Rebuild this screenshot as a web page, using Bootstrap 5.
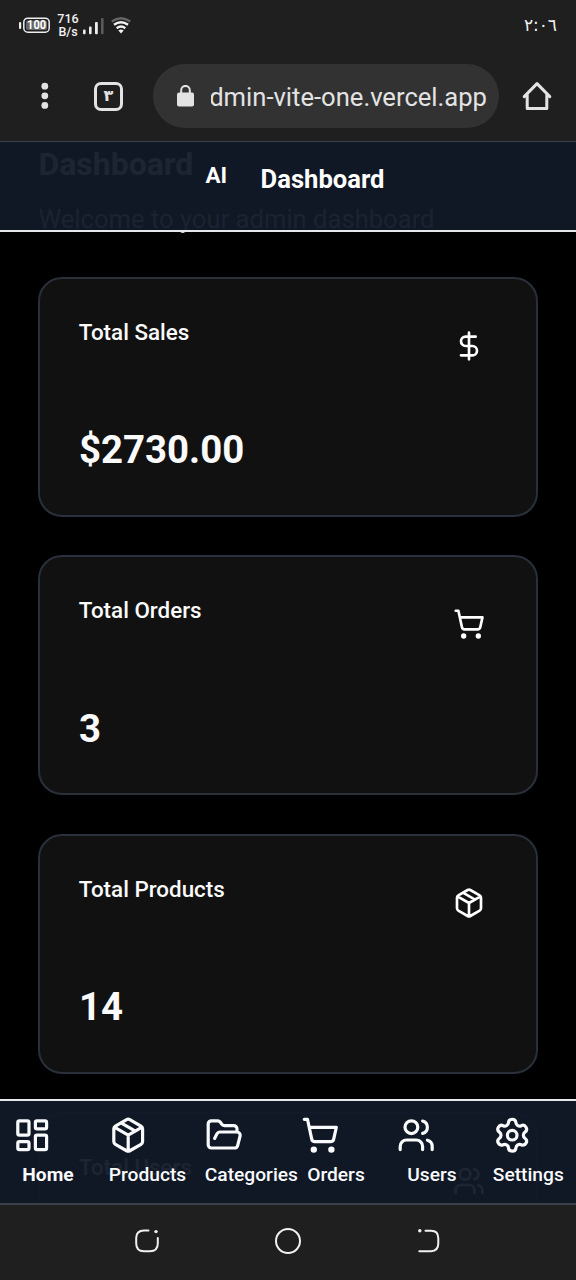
<!DOCTYPE html>
<html lang="en">
<head>
<meta charset="utf-8">
<meta name="viewport" content="width=device-width, initial-scale=1">
<title>Dashboard</title>
<link href="https://cdn.jsdelivr.net/npm/bootstrap@5.3.0/dist/css/bootstrap.min.css" rel="stylesheet">
<style>
  body { width: 576px; height: 1280px; background: #1f1f1f; color: #fff; font-family: Roboto, "DejaVu Sans", sans-serif; }
  svg { display: block; flex: none; }
  .ico { fill: none; stroke: currentColor; stroke-width: 2; stroke-linecap: round; stroke-linejoin: round; }
  .status { height: 51px; padding: 0 19px; color: #f2f2f2; }
  .speed { font-size: 12.5px; line-height: 12.5px; font-weight: 500; width: 24px; margin-left: 5px; }
  .signal { margin-left: 2px; }
  .wifi { margin-left: 7px; }
  .clock { font: 500 17px/20px "DejaVu Sans", sans-serif; letter-spacing: -1.1px; padding-bottom: 2px; }
  .browser { height: 90px; color: #e3e3e3; padding: 0 24px 0 39px; }
  .tabs-btn { width: 29px; height: 29px; border: 3px solid #e3e3e3; border-radius: 7px; font: bold 16px/20px "DejaVu Sans", sans-serif; margin-left: 43px; }
  .url { width: 346px; height: 64px; border-radius: 32px; background: #323232; margin-left: 30px; padding: 0 12px 0 24px; }
  .url-text { width: 276px; font-size: 25.6px; line-height: 40px; margin: 2px 0 0 17px; }
  .home-btn { margin-left: 23px; }
  .screen { height: 1064px; background: #000; }
  .topbar { height: 91px; border-top: 1px solid #374151; border-bottom: 2px solid #e5e7eb; background: rgba(17,24,39,.95); z-index: 2; }
  .topbar h1 { font-size: 25.6px; line-height: 36px; font-weight: 700; margin: 19px 0 0 33.5px; }
  .brand-mark { font-size: 22.4px; line-height: 32px; font-weight: 700; margin: 17px 0 0 205.5px; }
  .page { padding: 0 38.4px; }
  .page h2 { font-size: 32px; line-height: 44px; font-weight: 700; margin: 0; padding-top: 1px; }
  .welcome { font-size: 25.6px; line-height: 38px; color: #cfd3da; height: 91px; padding-top: 14px; }
  .stats { gap: 38.4px; }
  .stat { height: 240px; border: 2px solid #29303a; border-radius: 24px; background: #111; padding: 38px; flex: none; }
  .stat-label { font-size: 22.4px; line-height: 30px; font-weight: 500; color: #fafafa; padding-left: .4px; }
  .stat-icon { padding: 12.8px; }
  .stat-value { font-size: 38.4px; line-height: 51.2px; font-weight: 700; color: #fafafa; margin-bottom: 1.4px; padding-left: .5px; }
  .bottombar { height: 106px; border-top: 2px solid #e5e7eb; border-bottom: 2px solid #3a4049; background: rgba(17,24,39,.95); z-index: 2; }
  .tab { width: 96px; padding: 15.2px 12.8px 0; color: #f9fafb; }
  .tab svg { margin-left: -.3px; }
  .tab span { display: block; font-size: 19.2px; line-height: 26px; font-weight: 500; text-align: center; white-space: nowrap; margin-top: 7px; }
  .tab.current span { font-weight: 700; }
  .sysnav { height: 75px; padding: 0 134px 3px; color: #f1f1f1; }
</style>
</head>
<body class="m-0 overflow-hidden">
<svg width="0" height="0" class="position-absolute">
  <symbol id="package" viewBox="0 0 24 24"><path d="M11 21.73a2 2 0 0 0 2 0l7-4A2 2 0 0 0 21 16V8a2 2 0 0 0-1-1.73l-7-4a2 2 0 0 0-2 0l-7 4A2 2 0 0 0 3 8v8a2 2 0 0 0 1 1.73zM12 22V12M3.29 7 12 12l8.71-5M7.5 4.27l9 5.15"/></symbol>
  <symbol id="cart" viewBox="0 0 24 24"><circle cx="8" cy="21" r="1"/><circle cx="19" cy="21" r="1"/><path d="M2.05 2.05h2l2.66 12.42a2 2 0 0 0 2 1.58h9.78a2 2 0 0 0 1.95-1.57l1.65-7.43H5.12"/></symbol>
  <symbol id="users" viewBox="0 0 24 24"><path d="M16 21v-2a4 4 0 0 0-4-4H6a4 4 0 0 0-4 4v2M16 3.13a4 4 0 0 1 0 7.74M22 21v-2a4 4 0 0 0-3-3.87"/><circle cx="9" cy="7" r="4"/></symbol>
</svg>

<div class="status d-flex align-items-center justify-content-between">
  <div class="d-flex align-items-center">
    <svg width="32" height="17" viewBox="0 0 32 17"><rect x="0" y="5" width="2.2" height="7" rx="1" fill="#eee"/><rect x="4.8" y="1.2" width="25.4" height="14" rx="4" fill="#1f1f1f" stroke="#eee" stroke-width="1.5"/><rect x="7" y="3.4" width="21" height="9.6" rx="2" fill="#666"/><text x="17.6" y="12.4" text-anchor="middle" font-family="Roboto" font-weight="700" font-size="12" fill="#fff" textLength="19" lengthAdjust="spacingAndGlyphs">100</text></svg>
    <div class="speed text-center">716<br>B/s</div>
    <svg class="signal" width="22" height="18" viewBox="0 0 22 18"><g fill="#eee"><rect x="1" y="12.6" width="2.6" height="4.6" rx="1"/><rect x="7" y="9.6" width="2.6" height="7.6" rx="1"/><rect x="13" y="5" width="2.8" height="12.2" rx="1"/></g><rect x="19" y="1" width="2.6" height="16.2" rx="1" fill="#5a5a5a"/></svg>
    <svg class="wifi" width="20" height="17" viewBox="0 0 20 17" fill="none" stroke="#f2f2f2" stroke-width="2.4"><path d="M.8 4.6Q10-2 19.2 4.6" stroke="#666"/><path d="M3 7.8q7-5.2 14 0M5.7 11.2q4.3-3.2 8.6 0"/><path d="M7.4 13.4q2.6-1.8 5.2 0L10 16.4z" fill="#f2f2f2" stroke="none"/></svg>
  </div>
  <bdo dir="ltr" class="clock">٢:٠٦</bdo>
</div>

<div class="browser d-flex align-items-center">
  <svg width="12" height="28" viewBox="0 0 12 28" fill="currentColor"><circle cx="5.8" cy="4.2" r="3.4"/><circle cx="5.8" cy="13.8" r="3.4"/><circle cx="5.8" cy="23.4" r="3.4"/></svg>
  <div class="tabs-btn d-flex align-items-center justify-content-center flex-shrink-0">٣</div>
  <div class="url d-flex align-items-center flex-shrink-0">
    <svg width="17" height="22" viewBox="0 0 17 22"><rect x="0" y="7.5" width="17" height="14" rx="2" fill="#e3e3e3"/><path d="M4.2 8V5.2a4.3 4.3 0 0 1 8.6 0V8" fill="none" stroke="#e3e3e3" stroke-width="2"/></svg>
    <div class="url-text d-flex justify-content-end overflow-hidden text-nowrap">dmin-vite-one.vercel.app</div>
  </div>
  <svg class="home-btn" width="30" height="30" viewBox="0 0 30 30" fill="none" stroke="currentColor" stroke-width="3" stroke-linejoin="round" stroke-linecap="round"><path d="M2.2 15.6 15 2.6l12.8 13M5.2 13.5v14h19.6v-14"/></svg>
</div>

<main class="screen position-relative overflow-hidden">
  <header class="topbar position-absolute top-0 start-0 w-100 d-flex align-items-start">
    <div class="brand-mark">AI</div>
    <h1>Dashboard</h1>
  </header>

  <div class="page">
    <h2>Dashboard</h2>
    <div class="welcome">Welcome to your admin dashboard</div>
    <div class="stats d-flex flex-column">
      <section class="stat d-flex flex-column justify-content-between">
        <div class="d-flex justify-content-between align-items-start"><div class="stat-label">Total Sales</div><div class="stat-icon"><svg class="ico" width="32" height="32" viewBox="0 0 24 24"><path d="M12 2v20M17 5H9.5a3.5 3.5 0 0 0 0 7h5a3.5 3.5 0 0 1 0 7H6"/></svg></div></div>
        <div class="stat-value">$2730.00</div>
      </section>
      <section class="stat d-flex flex-column justify-content-between">
        <div class="d-flex justify-content-between align-items-start"><div class="stat-label">Total Orders</div><div class="stat-icon"><svg class="ico" width="32" height="32"><use href="#cart"/></svg></div></div>
        <div class="stat-value">3</div>
      </section>
      <section class="stat d-flex flex-column justify-content-between">
        <div class="d-flex justify-content-between align-items-start"><div class="stat-label">Total Products</div><div class="stat-icon"><svg class="ico" width="32" height="32"><use href="#package"/></svg></div></div>
        <div class="stat-value">14</div>
      </section>
      <section class="stat d-flex flex-column justify-content-between">
        <div class="d-flex justify-content-between align-items-start"><div class="stat-label">Total Users</div><div class="stat-icon"><svg class="ico" width="32" height="32"><use href="#users"/></svg></div></div>
      </section>
    </div>
  </div>

  <nav class="bottombar position-absolute bottom-0 start-0 w-100 d-flex">
    <div class="tab current"><svg class="ico" width="38.4" height="38.4" viewBox="0 0 24 24"><rect x="3" y="3" width="7" height="9" rx="1"/><rect x="14" y="3" width="7" height="5" rx="1"/><rect x="14" y="12" width="7" height="9" rx="1"/><rect x="3" y="16" width="7" height="5" rx="1"/></svg><span>Home</span></div>
    <div class="tab"><svg class="ico" width="38.4" height="38.4"><use href="#package"/></svg><span>Products</span></div>
    <div class="tab"><svg class="ico" width="38.4" height="38.4" viewBox="0 0 24 24"><path d="m6 14 1.5-2.9A2 2 0 0 1 9.24 10H20a2 2 0 0 1 1.94 2.5l-1.54 6a2 2 0 0 1-1.95 1.5H4a2 2 0 0 1-2-2V5a2 2 0 0 1 2-2h3.9a2 2 0 0 1 1.69.9l.81 1.2a2 2 0 0 0 1.67.9H18a2 2 0 0 1 2 2v2"/></svg><span>Categories</span></div>
    <div class="tab"><svg class="ico" width="38.4" height="38.4"><use href="#cart"/></svg><span>Orders</span></div>
    <div class="tab"><svg class="ico" width="38.4" height="38.4"><use href="#users"/></svg><span>Users</span></div>
    <div class="tab"><svg class="ico" width="38.4" height="38.4" viewBox="0 0 24 24"><path d="M9.671 4.136a2.34 2.34 0 0 1 4.659 0 2.34 2.34 0 0 0 3.319 1.915 2.34 2.34 0 0 1 2.33 4.033 2.34 2.34 0 0 0 0 3.831 2.34 2.34 0 0 1-2.33 4.033 2.34 2.34 0 0 0-3.319 1.915 2.34 2.34 0 0 1-4.659 0 2.34 2.34 0 0 0-3.32-1.915 2.34 2.34 0 0 1-2.33-4.033 2.34 2.34 0 0 0 0-3.831A2.34 2.34 0 0 1 6.35 6.051a2.34 2.34 0 0 0 3.319-1.915"/><circle cx="12" cy="12" r="3"/></svg><span>Settings</span></div>
  </nav>
</main>

<div class="sysnav d-flex align-items-center justify-content-between">
  <svg width="26" height="26" viewBox="0 0 26 26" fill="none" stroke="currentColor" stroke-width="2" stroke-linecap="round"><path d="M14.5 2.4H10Q2.2 2.4 2.2 10v5.5q0 7.7 7.8 7.7h6q7.8 0 7.8-7.7V10"/><circle cx="22" cy="3.6" r="1.7" fill="currentColor" stroke="none"/></svg>
  <svg width="28" height="28" viewBox="0 0 28 28" fill="none" stroke="currentColor" stroke-width="2"><circle cx="14" cy="14" r="12"/></svg>
  <svg width="26" height="26" viewBox="0 0 26 26" fill="none" stroke="currentColor" stroke-width="2" stroke-linecap="round"><path d="M9.5 2.8H15q7.3 0 7.3 7.4v5.4q0 7.6-7.3 7.6H3.3"/><circle cx="3.8" cy="2.8" r="1.7" fill="currentColor" stroke="none"/></svg>
</div>
<script src="https://cdn.jsdelivr.net/npm/bootstrap@5.3.0/dist/js/bootstrap.bundle.min.js"></script>
</body>
</html>
